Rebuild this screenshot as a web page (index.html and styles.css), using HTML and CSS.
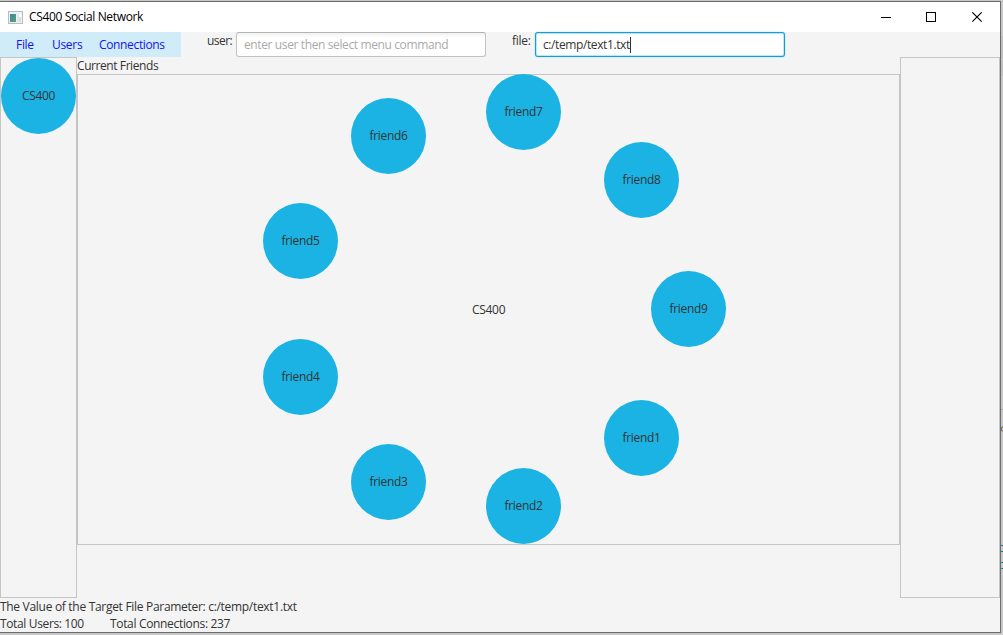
FILE: index.html
```html
<!DOCTYPE html>
<html lang="en">
<head>
<meta charset="utf-8">
<title>CS400 Social Network</title>
<link rel="stylesheet" href="styles.css">
</head>
<body>
<div class="window">
  <header class="titlebar">
    <svg class="app-icon" width="15" height="13" viewBox="0 0 15 13">
      <defs><linearGradient id="g" x1="0" y1="0" x2="1" y2="1"><stop offset="0" stop-color="#4a7fa8"/><stop offset="1" stop-color="#4fa873"/></linearGradient></defs>
      <rect x=".5" y=".5" width="14" height="12" fill="#eef0f2" stroke="#b9bcc2"/>
      <rect x="2" y="3" width="6" height="8" fill="url(#g)"/>
      <rect x="9" y="3" width="2" height="8" fill="#dcebe4"/>
      <rect x="11" y="3" width="2" height="3" fill="#fff"/>
      <rect x="11" y="6" width="2" height="5" fill="#d9dde2"/>
    </svg>
    <span class="title">CS400 Social Network</span>
    <svg class="controls" width="102" height="11" viewBox="0 0 102 11" fill="none" stroke="#000">
      <path d="M0 5.5h10M45.500 .5h9v9h-9z" shape-rendering="crispEdges"/>
      <path d="M91.300 .3l9.400 9.400M100.700 .3l-9.400 9.400" stroke-width="1.100"/>
    </svg>
  </header>
  <div class="toolbar">
    <nav class="menu"><span class="m-file">File</span><span class="m-users">Users</span><span class="m-conn">Connections</span></nav>
    <span class="label user-label">user:</span>
    <div class="field"><span class="prompt">enter user then select menu command</span></div>
    <span class="label file-label">file:</span>
    <div class="field focused"><span class="value">c:/temp/text1.txt</span><i class="caret"></i></div>
  </div>
  <main class="content">
    <aside class="side"><div class="node"><span>CS400</span></div></aside>
    <section class="center">
      <div class="heading"><span>Current Friends</span></div>
      <div class="canvas">
        <div class="node f1"><span>friend1</span></div>
        <div class="node f2"><span>friend2</span></div>
        <div class="node f3"><span>friend3</span></div>
        <div class="node f4"><span>friend4</span></div>
        <div class="node f5"><span>friend5</span></div>
        <div class="node f6"><span>friend6</span></div>
        <div class="node f7"><span>friend7</span></div>
        <div class="node f8"><span>friend8</span></div>
        <div class="node f9"><span>friend9</span></div>
        <div class="hub"><span>CS400</span></div>
      </div>
    </section>
    <aside class="side wide"></aside>
  </main>
  <footer class="status">
    <div><span class="target">The Value of the Target File Parameter: c:/temp/text1.txt</span></div>
    <div class="totals"><span class="t-users">Total Users: 100</span><span class="t-conn">Total Connections: 237</span></div>
  </footer>
</div>
<svg class="edge" width="2" height="635" viewBox="0 0 2 635" shape-rendering="crispEdges">
  <path d="M0 36h2v23h-2zM0 60h2v16h-2z" fill="#c0c0c0"/>
  <path d="M0 409h2v1h-2z" fill="#aaa"/>
  <path d="M0 427h1v4h-1z" fill="#4d79ad"/><path d="M1 426h1v2h-1zM1 430h1v2h-1z" fill="#b08a55"/>
  <path d="M0 545h2v1h-2zM0 551h2v1h-2zM0 562h2v1h-2zM0 568h2v1h-2z" fill="#19808f"/>
</svg>
</body>
</html>
```
FILE: styles.css
```css
* { box-sizing: border-box; }
body {
  margin: 0;
  width: 1003px;
  height: 635px;
  overflow: hidden;
  display: flex;
  align-items: flex-start;
  background: #c8c8c8;
  font: 12px/17px "Open Sans", "Noto Sans", sans-serif;
  letter-spacing: -0.3px;
  color: #333;
}
span { white-space: nowrap; }
.window {
  width: 1001px;
  height: 632px;
  margin-top: 1px;
  background: #f4f4f4;
  border: solid #6b6b6b;
  border-width: 1px 1px 1px 0;
}
.edge { flex: none; }
.titlebar {
  display: flex;
  align-items: center;
  height: 30px;
  padding: 0 17px 0 8px;
  background: #fff;
  color: #000;
}
.title { margin-left: 6px; padding-bottom: 2px; flex: 1; letter-spacing: -0.35px; }
.controls { flex: none; }
.toolbar { display: flex; height: 25px; }
.menu {
  display: flex;
  width: 181px;
  padding: 4px 0 0 16px;
  background: #d0ecf9;
  color: #1414f0;
}
.m-file { width: 36px; }
.m-users { width: 47px; }
.m-conn { letter-spacing: -0.35px; }
.user-label { width: 55px; padding-left: 26px; letter-spacing: -0.55px; }
.file-label { width: 49px; padding-left: 26px; }
.field {
  display: flex;
  width: 250px;
  height: 25px;
  padding: 3px 7px;
  background: linear-gradient(#f1f1f1, #fff 5px);
  border: 1px solid #c2c2c2;
  border-top-color: #b3b3b3;
  border-radius: 3px;
}
.prompt { color: #aaa; letter-spacing: -0.38px; }
.value { letter-spacing: -0.4px; }
.focused {
  background: #fff;
  border-color: #0f9ed5;
  box-shadow: inset 0 0 0 1px #bfe6f5, 0 0 1px #0f9ed5;
}
.caret { width: 1px; height: 16px; margin-top: 1px; background: #333; }
.content { display: flex; height: 541px; }
.side { width: 77px; border: 1px solid #c5c5c5; }
.wide { width: 100px; }
.center { width: 823px; }
.heading { height: 17px; letter-spacing: -0.42px; }
.canvas {
  position: relative;
  height: 471px;
  border: 1px solid #c5c5c5;
}
.node {
  display: flex;
  align-items: center;
  justify-content: center;
  width: 75px;
  height: 76px;
  padding-bottom: 1px;
  border-radius: 50%;
  background: #1bb3e3;
}
.canvas .node, .hub { position: absolute; }
.f1 { left: 526px; top: 325px; }
.f2 { left: 408px; top: 393px; }
.f3 { left: 273px; top: 369px; }
.f4 { left: 185px; top: 264px; }
.f5 { left: 185px; top: 128px; }
.f6 { left: 273px; top: 23px; }
.f7 { left: 408px; top: -1px; }
.f8 { left: 526px; top: 67px; }
.f9 { left: 573px; top: 196px; }
.hub { left: 394px; top: 226px; }
.totals { display: flex; }
.t-users { width: 110px; letter-spacing: -0.36px; }
.t-conn { letter-spacing: -0.33px; }
```
